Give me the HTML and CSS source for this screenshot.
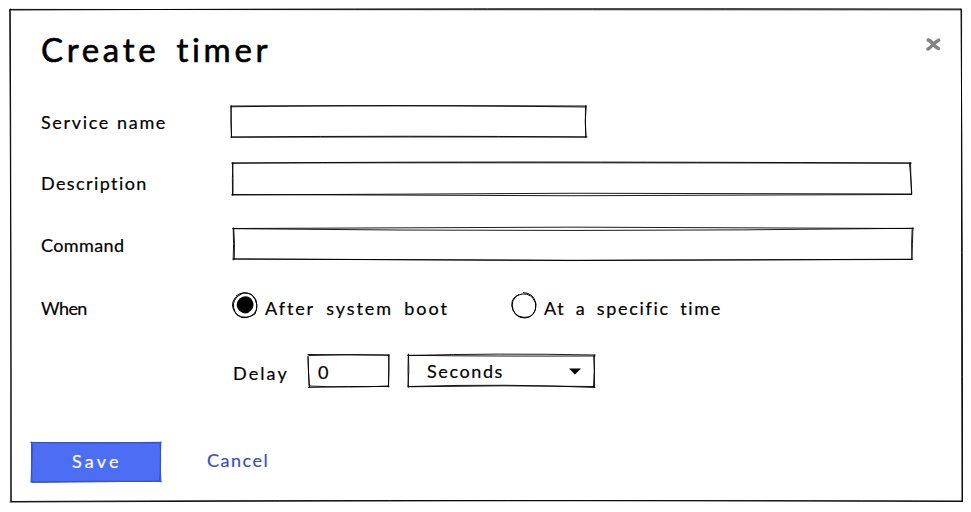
FILE: index.html
```html
<!DOCTYPE html>
<html lang="en">
<head>
<meta charset="utf-8">
<title>Create timer</title>
<link rel="stylesheet" href="styles.css">
</head>
<body>
<main class="dialog">
  <svg class="sketch" viewBox="0 0 952 492"><path d="M0 1Q480-1 951 0M0 .4Q450 .8 951 .8M.3 0Q1.2 240 .8 492M-.3 1Q1 250 1.2 492M951 0Q952.8 240 952.5 492.5M951.6 1Q951.2 240 952 492M1 492.5Q400 490.5 952 492.5M0 493Q560 491 952 492"/></svg>
  <header class="header">
    <h1 class="title">Create timer</h1>
    <svg class="close" viewBox="0 0 15 13"><path d="M2.2 2Q5 3 7 6T12.3 10.5M12.6 2.2Q9 4 6.5 7T2 11"/></svg>
  </header>
  <form class="form">
    <div class="row row-service">
      <label class="label service">Service name</label>
      <div class="field name-field"><svg class="sketch" viewBox="0 0 355 31"><path d="M0 .8Q150-1.5 355 1M0 0Q200-.5 355 0M.2 0Q-.5 15 .5 31M0 0L.5 31M354.5 0Q354 15 355 31M355.2 0Q353.5 15 354.8 31M0 31Q180 29.5 355 31M0 31.2Q180 30.8 356 31"/></svg></div>
    </div>
    <div class="row row-description">
      <label class="label description">Description</label>
      <div class="field wide-field"><svg class="sketch" viewBox="0 0 680 32"><path d="M0 .2Q220-2 679 0M0 0Q280-.5 679 .2M.5 0Q1.3 15 1 32M1 0Q0 15 .5 32M678.5 0Q678.8 14 679.5 31M677.5 0Q679 15 679.8 31M0 32Q340 29 679.5 31M0 31.5Q340 34 679.5 31.5"/></svg></div>
    </div>
    <div class="row row-command">
      <label class="label command">Command</label>
      <div class="field command-field"><svg class="sketch" viewBox="0 0 680 32"><path d="M0 .5Q340-2.2 680 .5M0 .7Q340 4.4 680 .3M.7 0Q2 15 1.3 31M.2 0Q1 15 .2 32M680 0Q679.5 15 678.8 31.5M679.2 0Q678 15 679 31M1 31Q340 34 679 31.2M0 31Q340 33.3 679 31.5"/></svg></div>
    </div>
    <div class="row row-when">
      <span class="label when">When</span>
      <div class="option first-option">
        <svg class="radio" viewBox="0 0 26 27"><path d="M4 4Q12-2 20 3Q28 12 23 22Q14 28 5 23Q-3 14 3 6L11 1Q20 0 24 8Q27 20 19 24Q9 29 3 20Q-1 11 5 5"/><path class="dot" d="M8 7Q14 3 18.5 7Q23 13 18.5 18Q14 23 8 18.5Q3 13 8 7"/></svg>
        <span class="after">After system boot</span>
      </div>
      <div class="option">
        <svg class="radio" viewBox="0 0 26 27"><path d="M12 .5Q23 1 25 12Q25 25 14 26Q3 26 .8 14Q0 4 11 2Q21 1 24.5 11Q26 21 18 25Q6 27 2 18Q-1 7 8 2.5"/></svg>
        <span class="specific">At a specific time</span>
      </div>
    </div>
    <div class="row row-delay">
      <span class="label delay">Delay</span>
      <div class="field number-field"><svg class="sketch" viewBox="0 0 81 32"><path d="M0-.5L81 .2M1 .5Q42-1 81 0M0 1Q.2 16 1.5 32M0 2L1 31M81 0L80.4 31.5M80.7 0Q81.3 15 80.5 32M.5 32.5Q40 31 81 31.5M2 31Q40 33 80 31"/></svg><span>0</span></div>
      <div class="field select-field"><svg class="sketch" viewBox="0 0 187 32"><path d="M0 .5Q90-2 187 0M0 .3Q85 1.4 187 1M.3-1Q-.4 15 .4 32M.5 0Q1.5 16 0 31M186.3 0L186.5 32.5M185.8 1Q187 15 185.5 32M0 31.5Q100 28.5 187 32.5M0 31.8Q95 30 186 31.5"/></svg><span class="seconds">Seconds</span><svg class="arrow" viewBox="0 0 12 7"><path d="M0 .5H12L6 6.5Z"/></svg></div>
    </div>
  </form>
  <footer class="footer">
    <div class="save-button"><svg class="sketch blue" viewBox="0 0 130 40"><path d="M0 .4Q65 1.5 130 .3M0 .5L129 1M.5 0Q1.3 20 0 40M2 2Q.5 18 1 39M130 0Q128.5 18 130 40M129 2Q130.5 17 128.5 38M0 40Q65 38.5 130 39.5M1 40.5Q60 40 129 39"/></svg><span class="save">Save</span></div>
    <a class="cancel">Cancel</a>
  </footer>
</main>
</body>
</html>
```
FILE: styles.css
```css
* { box-sizing: border-box; }
body { margin: 0; background: #fff; color: #000; font: 18px/24px Virgil, Excalifont, Lato, sans-serif; -webkit-text-stroke: .2px currentColor; }
.dialog { position: relative; width: 952px; height: 492px; margin: 9px 9px 11px 10px; padding: 0 21px; }
.sketch { position: absolute; top: 0; left: 0; width: 100%; height: 100%; overflow: visible; pointer-events: none; }
.sketch path { fill: none; stroke: #000; stroke-width: .9; stroke-linecap: round; }
.header { display: flex; justify-content: space-between; height: 97px; padding: 19px 0 0 10px; }
.title { margin: 0; font-size: 33px; line-height: 42px; font-weight: 400; letter-spacing: 3.7px; word-spacing: 5px; white-space: nowrap; -webkit-text-stroke: .6px #000; }
.close { width: 15px; height: 13px; margin-top: 10px; }
.close path { fill: none; stroke: #828282; stroke-width: 3.5; stroke-linecap: round; }
.form { padding-left: 10px; }
.row { display: flex; height: 32px; white-space: nowrap; }
.label { width: 190px; flex: none; }
.field { position: relative; flex: none; height: 32px; }
.name-field { width: 355px; height: 31px; }
.wide-field { width: 680px; margin-left: 1px; }
.command-field { width: 680px; margin-left: 2px; }
.row-service { height: 57px; }
.row-description { height: 65px; }
.row-command { height: 64px; }
.row-when { height: 63px; }
.service { padding-top: 4px; letter-spacing: 1.65px; word-spacing: 1px; }
.description { padding-top: 8px; letter-spacing: 1.4px; }
.command { padding-top: 5px; letter-spacing: .4px; }
.when { padding-top: 4px; letter-spacing: -.6px; }
.option { display: flex; gap: 7px; padding-top: 4px; }
.first-option { width: 279px; margin-left: 1px; }
.radio { width: 26px; height: 27px; margin-top: -4px; overflow: visible; }
.radio path { fill: none; stroke: #000; stroke-width: 1; }
.radio .dot { fill: #000; stroke-width: 1.5; }
.after { letter-spacing: 1.9px; word-spacing: 5px; }
.specific { letter-spacing: 1.7px; word-spacing: 4px; }
.delay { width: 75px; margin-left: 192px; padding-top: 6px; letter-spacing: 2.1px; }
.number-field { width: 81px; margin-right: 19px; padding: 5px 10px; }
.select-field { display: flex; align-items: center; justify-content: space-between; width: 187px; padding: 0 14px 0 19px; }
.seconds { letter-spacing: 1.6px; }
.arrow { width: 12px; height: 7px; }
.footer { display: flex; align-items: flex-start; gap: 46px; margin-top: 55px; }
.save-button { position: relative; width: 130px; height: 40px; padding: 7px 0 0 41px; background: #4c6ef5; color: #fff; }
.blue path { stroke: #364fc7; }
.save { letter-spacing: 3.2px; }
.cancel { padding-top: 6px; color: #364fc7; letter-spacing: 1.5px; }
```
